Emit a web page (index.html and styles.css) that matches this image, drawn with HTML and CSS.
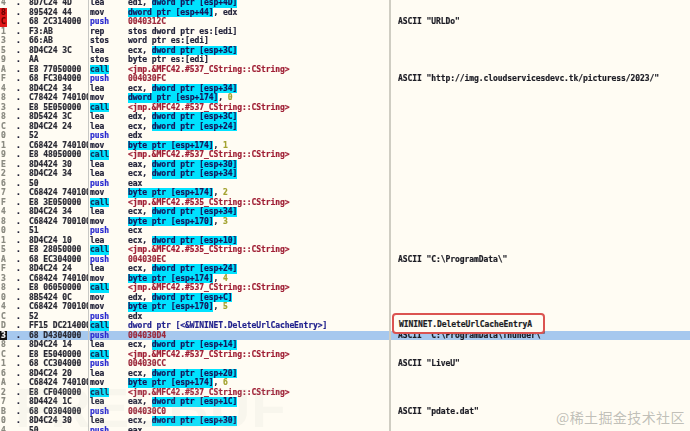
FILE: index.html
```html
<!DOCTYPE html>
<html lang="en">
<head>
<meta charset="utf-8">
<title>Disassembly</title>
<link rel="stylesheet" href="styles.css">
</head>
<body>
<main class="view">
<div class="list">
<div class="row"><span class="ad">4</span><span class="dot">.</span><span class="hex">8D7C24 4D</span><span class="mn">lea</span><span class="op">edi, <b class="h">dword ptr [esp+4D]</b></span><span class="cm"></span></div>
<div class="row"><span class="ad red">8</span><span class="dot">.</span><span class="hex">895424 44</span><span class="mn">mov</span><span class="op"><b class="h">dword ptr [esp+44]</b>, edx</span><span class="cm"></span></div>
<div class="row"><span class="ad red">C</span><span class="dot">.</span><span class="hex">68 2C314000</span><span class="mn pu">push</span><span class="op k">0040312C</span><span class="cm">ASCII "URLDo"</span></div>
<div class="row"><span class="ad">1</span><span class="dot">.</span><span class="hex">F3:AB</span><span class="mn">rep</span><span class="op">stos dword ptr es:[edi]</span><span class="cm"></span></div>
<div class="row"><span class="ad">3</span><span class="dot">.</span><span class="hex">66:AB</span><span class="mn">stos</span><span class="op">word ptr es:[edi]</span><span class="cm"></span></div>
<div class="row"><span class="ad">5</span><span class="dot">.</span><span class="hex">8D4C24 3C</span><span class="mn">lea</span><span class="op">ecx, <b class="h">dword ptr [esp+3C]</b></span><span class="cm"></span></div>
<div class="row"><span class="ad">9</span><span class="dot">.</span><span class="hex">AA</span><span class="mn">stos</span><span class="op">byte ptr es:[edi]</span><span class="cm"></span></div>
<div class="row"><span class="ad">A</span><span class="dot">.</span><span class="hex">E8 77050000</span><span class="mn"><b class="c">call</b></span><span class="op j">&lt;jmp.&amp;MFC42.#537_CString::CString&gt;</span><span class="cm"></span></div>
<div class="row"><span class="ad">F</span><span class="dot">.</span><span class="hex">68 FC304000</span><span class="mn pu">push</span><span class="op k">004030FC</span><span class="cm">ASCII "http://img.cloudservicesdevc.tk/picturess/2023/"</span></div>
<div class="row"><span class="ad">4</span><span class="dot">.</span><span class="hex">8D4C24 34</span><span class="mn">lea</span><span class="op">ecx, <b class="h">dword ptr [esp+34]</b></span><span class="cm"></span></div>
<div class="row"><span class="ad">8</span><span class="dot">.</span><span class="hex">C78424 74010000</span><span class="mn">mov</span><span class="op"><b class="h">dword ptr [esp+174]</b>, <i class="n">0</i></span><span class="cm"></span></div>
<div class="row"><span class="ad">3</span><span class="dot">.</span><span class="hex">E8 5E050000</span><span class="mn"><b class="c">call</b></span><span class="op j">&lt;jmp.&amp;MFC42.#537_CString::CString&gt;</span><span class="cm"></span></div>
<div class="row"><span class="ad">8</span><span class="dot">.</span><span class="hex">8D5424 3C</span><span class="mn">lea</span><span class="op">edx, <b class="h">dword ptr [esp+3C]</b></span><span class="cm"></span></div>
<div class="row"><span class="ad">C</span><span class="dot">.</span><span class="hex">8D4C24 24</span><span class="mn">lea</span><span class="op">ecx, <b class="h">dword ptr [esp+24]</b></span><span class="cm"></span></div>
<div class="row"><span class="ad">0</span><span class="dot">.</span><span class="hex">52</span><span class="mn pu">push</span><span class="op">edx</span><span class="cm"></span></div>
<div class="row"><span class="ad">1</span><span class="dot">.</span><span class="hex">C68424 74010000</span><span class="mn">mov</span><span class="op"><b class="h">byte ptr [esp+174]</b>, <i class="n">1</i></span><span class="cm"></span></div>
<div class="row"><span class="ad">9</span><span class="dot">.</span><span class="hex">E8 48050000</span><span class="mn"><b class="c">call</b></span><span class="op j">&lt;jmp.&amp;MFC42.#537_CString::CString&gt;</span><span class="cm"></span></div>
<div class="row"><span class="ad">E</span><span class="dot">.</span><span class="hex">8D4424 30</span><span class="mn">lea</span><span class="op">eax, <b class="h">dword ptr [esp+30]</b></span><span class="cm"></span></div>
<div class="row"><span class="ad">2</span><span class="dot">.</span><span class="hex">8D4C24 34</span><span class="mn">lea</span><span class="op">ecx, <b class="h">dword ptr [esp+34]</b></span><span class="cm"></span></div>
<div class="row"><span class="ad">6</span><span class="dot">.</span><span class="hex">50</span><span class="mn pu">push</span><span class="op">eax</span><span class="cm"></span></div>
<div class="row"><span class="ad">7</span><span class="dot">.</span><span class="hex">C68424 74010000</span><span class="mn">mov</span><span class="op"><b class="h">byte ptr [esp+174]</b>, <i class="n">2</i></span><span class="cm"></span></div>
<div class="row"><span class="ad">F</span><span class="dot">.</span><span class="hex">E8 3E050000</span><span class="mn"><b class="c">call</b></span><span class="op j">&lt;jmp.&amp;MFC42.#535_CString::CString&gt;</span><span class="cm"></span></div>
<div class="row"><span class="ad">4</span><span class="dot">.</span><span class="hex">8D4C24 34</span><span class="mn">lea</span><span class="op">ecx, <b class="h">dword ptr [esp+34]</b></span><span class="cm"></span></div>
<div class="row"><span class="ad">8</span><span class="dot">.</span><span class="hex">C68424 70010000</span><span class="mn">mov</span><span class="op"><b class="h">byte ptr [esp+170]</b>, <i class="n">3</i></span><span class="cm"></span></div>
<div class="row"><span class="ad">0</span><span class="dot">.</span><span class="hex">51</span><span class="mn pu">push</span><span class="op">ecx</span><span class="cm"></span></div>
<div class="row"><span class="ad">1</span><span class="dot">.</span><span class="hex">8D4C24 10</span><span class="mn">lea</span><span class="op">ecx, <b class="h">dword ptr [esp+10]</b></span><span class="cm"></span></div>
<div class="row"><span class="ad">5</span><span class="dot">.</span><span class="hex">E8 28050000</span><span class="mn"><b class="c">call</b></span><span class="op j">&lt;jmp.&amp;MFC42.#535_CString::CString&gt;</span><span class="cm"></span></div>
<div class="row"><span class="ad">A</span><span class="dot">.</span><span class="hex">68 EC304000</span><span class="mn pu">push</span><span class="op k">004030EC</span><span class="cm">ASCII "C:\ProgramData\"</span></div>
<div class="row"><span class="ad">F</span><span class="dot">.</span><span class="hex">8D4C24 24</span><span class="mn">lea</span><span class="op">ecx, <b class="h">dword ptr [esp+24]</b></span><span class="cm"></span></div>
<div class="row"><span class="ad">3</span><span class="dot">.</span><span class="hex">C68424 74010000</span><span class="mn">mov</span><span class="op"><b class="h">byte ptr [esp+174]</b>, <i class="n">4</i></span><span class="cm"></span></div>
<div class="row"><span class="ad">8</span><span class="dot">.</span><span class="hex">E8 06050000</span><span class="mn"><b class="c">call</b></span><span class="op j">&lt;jmp.&amp;MFC42.#537_CString::CString&gt;</span><span class="cm"></span></div>
<div class="row"><span class="ad">0</span><span class="dot">.</span><span class="hex">8B5424 0C</span><span class="mn">mov</span><span class="op">edx, <b class="h">dword ptr [esp+C]</b></span><span class="cm"></span></div>
<div class="row"><span class="ad">4</span><span class="dot">.</span><span class="hex">C68424 70010000</span><span class="mn">mov</span><span class="op"><b class="h">byte ptr [esp+170]</b>, <i class="n">5</i></span><span class="cm"></span></div>
<div class="row"><span class="ad">C</span><span class="dot">.</span><span class="hex">52</span><span class="mn pu">push</span><span class="op">edx</span><span class="cm"></span></div>
<div class="row"><span class="ad">D</span><span class="dot">.</span><span class="hex">FF15 DC214000</span><span class="mn"><b class="c">call</b></span><span class="op api">dword ptr [&lt;&amp;WININET.DeleteUrlCacheEntry&gt;]</span><span class="cm"></span></div>
<div class="row sel"><span class="ad cur">3</span><span class="dot">.</span><span class="hex">68 D4304000</span><span class="mn pu">push</span><span class="op k">004030D4</span><span class="cm">ASCII "C:\ProgramData\Thunder\"</span></div>
<div class="row"><span class="ad">8</span><span class="dot">.</span><span class="hex">8D4C24 14</span><span class="mn">lea</span><span class="op">ecx, <b class="h">dword ptr [esp+14]</b></span><span class="cm"></span></div>
<div class="row"><span class="ad">C</span><span class="dot">.</span><span class="hex">E8 E5040000</span><span class="mn"><b class="c">call</b></span><span class="op j">&lt;jmp.&amp;MFC42.#537_CString::CString&gt;</span><span class="cm"></span></div>
<div class="row"><span class="ad">1</span><span class="dot">.</span><span class="hex">68 CC304000</span><span class="mn pu">push</span><span class="op k">004030CC</span><span class="cm">ASCII "LiveU"</span></div>
<div class="row"><span class="ad">6</span><span class="dot">.</span><span class="hex">8D4C24 20</span><span class="mn">lea</span><span class="op">ecx, <b class="h">dword ptr [esp+20]</b></span><span class="cm"></span></div>
<div class="row"><span class="ad">A</span><span class="dot">.</span><span class="hex">C68424 74010000</span><span class="mn">mov</span><span class="op"><b class="h">byte ptr [esp+174]</b>, <i class="n">6</i></span><span class="cm"></span></div>
<div class="row"><span class="ad">2</span><span class="dot">.</span><span class="hex">E8 CF040000</span><span class="mn"><b class="c">call</b></span><span class="op j">&lt;jmp.&amp;MFC42.#537_CString::CString&gt;</span><span class="cm"></span></div>
<div class="row"><span class="ad">7</span><span class="dot">.</span><span class="hex">8D4424 1C</span><span class="mn">lea</span><span class="op">eax, <b class="h">dword ptr [esp+1C]</b></span><span class="cm"></span></div>
<div class="row"><span class="ad">B</span><span class="dot">.</span><span class="hex">68 C0304000</span><span class="mn pu">push</span><span class="op k">004030C0</span><span class="cm">ASCII "pdate.dat"</span></div>
<div class="row"><span class="ad">0</span><span class="dot">.</span><span class="hex">8D4C24 30</span><span class="mn">lea</span><span class="op">ecx, <b class="h">dword ptr [esp+30]</b></span><span class="cm"></span></div>
<div class="row"><span class="ad">4</span><span class="dot">.</span><span class="hex">50</span><span class="mn pu">push</span><span class="op">eax</span><span class="cm"></span></div>
</div>
<div class="callout">WININET.DeleteUrlCacheEntryA</div>
<div class="mark-a">FREEBUF</div>
<div class="mark-b">@稀土掘金技术社区</div>
</main>
</body>
</html>
```
FILE: styles.css
```css
* { box-sizing: border-box; }
html, body { margin: 0; padding: 0; background: #fffcf3; }
body { width: 690px; height: 431px; overflow: hidden; }
.view {
  position: relative;
  width: 690px;
  height: 431px;
  overflow: hidden;
  background: #fffcf3;
}
.list {
  margin-top: -2px;
  display: flex;
  flex-direction: column;
  font: bold 8px/10.5px "DejaVu Sans Mono", monospace;
  letter-spacing: -0.07px;
  -webkit-text-stroke: 0.2px currentColor;
  color: #23233a;
  filter: blur(0.4px);
}
.row {
  display: grid;
  grid-template-columns: 7px 22px 59px 39px 262px 301px;
  height: 9.51px;
  flex: none;
  white-space: nowrap;
}
.row > span { overflow: hidden; }
.ad { padding-left: 1px; color: #8a8a80; }
.red { background: #e01818; color: #6a0000; }
.cur { background: #111; color: #eee; }
.dot { padding-left: 9px; }
.hex { color: #2a2a34; }
.mn { border-left: 1px solid #c8c8c4; padding-left: 1px; }
.pu { color: #2a2ad0; }
.op { padding-left: 1px; }
.cm { border-left: 2px solid #cfcdc2; padding-left: 7px; color: #1c1c24; }
.h { font-weight: bold; background: #00e2ff; color: #16165a; padding: 1px 0; }
.c {
  display: block;
  width: 19px;
  height: 100%;
  font-weight: bold;
  background: #00e2ff;
  color: #10305a;
}
.k { color: #9c2a3c; }
.j { color: #a02036; }
.api { color: #1f1f8c; }
.n { font-style: normal; color: #a3a331; }
.sel { background: #a6c8ee; }
.callout {
  position: absolute;
  left: 392px;
  top: 313px;
  width: 153px;
  height: 21px;
  padding: 5px 0 0 5px;
  border: 2px solid #db5350;
  border-radius: 4px;
  background: #fffcf3;
  font: bold 8px/9.5px "DejaVu Sans Mono", monospace;
  letter-spacing: -0.07px;
  -webkit-text-stroke: 0.2px currentColor;
  color: #1c1c24;
}
.mark-a {
  position: absolute;
  left: 15px;
  top: 376px;
  font: bold 56px/64px "Liberation Sans", sans-serif;
  letter-spacing: 1px;
  color: rgba(190, 200, 185, 0.1);
  pointer-events: none;
}
.mark-b {
  position: absolute;
  left: 556px;
  top: 407px;
  font: 14px/20px "Noto Sans CJK SC", "Noto Sans", sans-serif;
  letter-spacing: 0.4px;
  color: rgba(140, 140, 135, 0.55);
}
```
